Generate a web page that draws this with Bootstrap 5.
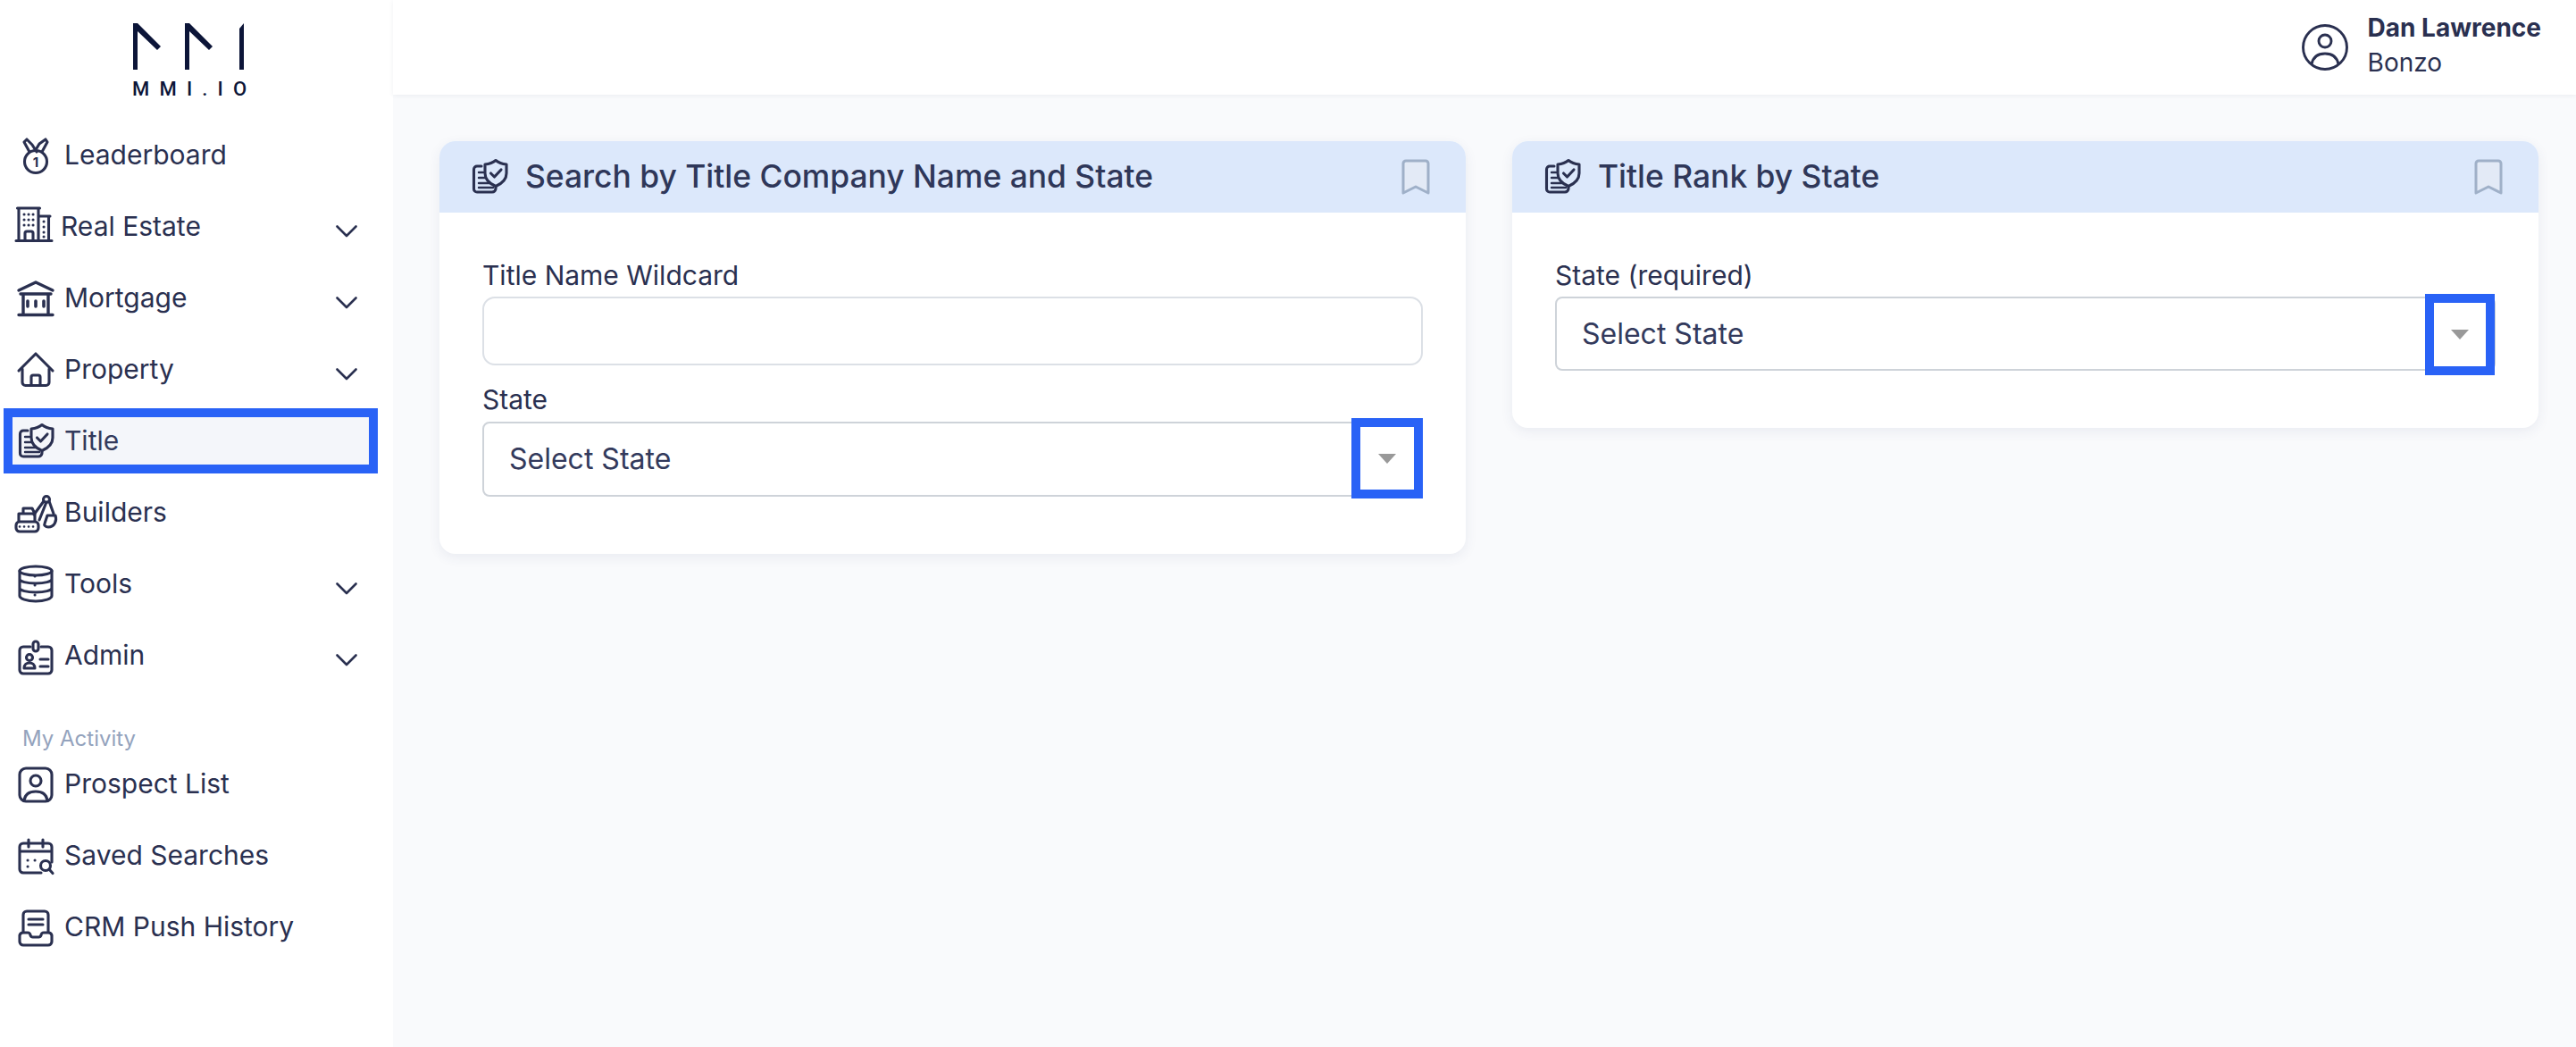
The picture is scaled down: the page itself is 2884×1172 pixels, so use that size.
<!doctype html>
<html lang="en">
<head>
<meta charset="utf-8">
<title>MMI.IO</title>
<link href="https://cdn.jsdelivr.net/npm/bootstrap@5.3.0/dist/css/bootstrap.min.css" rel="stylesheet">
<style>
html,body{height:100%}
body{font-family:"Inter","Liberation Sans",sans-serif;background:#f9fafc;color:#2a3050;overflow:hidden}
.app-shell{height:1172px}
.side-panel{width:440px;background:#fff;flex:none}
.logo-wrap{height:137px;padding-top:26px;padding-left:148px}
.logo-text{font-family:"Roboto","Liberation Sans",sans-serif;font-weight:500;font-size:22px;line-height:15px;letter-spacing:11.2px;color:#0c1538;white-space:nowrap;margin-top:12px}
.side-nav{gap:7px}
.side-link{height:73px;padding:0 0 0 20px;font-size:30px;color:#2a3050;gap:12px;width:440px}
.side-link:hover,.side-link:focus{color:#2a3050}
.side-link span{flex:1;margin-top:-1px}
.side-link.is-active{margin-left:4px;width:419px;padding-left:6px;border:10px solid #2962f6;background:#f4f6fa;color:#333a5c;gap:12px}
.ico{width:40px;height:40px;flex:none;overflow:visible;fill:none;stroke:#2a3050;stroke-width:3.1;stroke-linecap:round;stroke-linejoin:round}
.ico.narrow{margin-right:-4px}
.chev{width:24px;height:14px;flex:none;margin-right:40px;margin-top:10px;fill:none;stroke:#2a3050;stroke-width:2.6;stroke-linecap:round;stroke-linejoin:round}
.side-head{font-size:24px;line-height:30px;color:#94a3bd;padding-left:25px;margin:35px 0 -8px}
.top-strip{height:106px;background:#fff;box-shadow:0 1px 5px rgba(40,50,90,.07);padding-right:39px;position:relative}
.who-icon{width:52px;height:52px;fill:none;stroke:#2a3050;stroke-width:2.9;margin-right:22px}
.who-name{font-size:28px;line-height:39px;font-weight:700;color:#2a3050;margin-top:-5px}
.who-role{font-size:28px;line-height:39px;color:#2a3050}
.main-area{padding:52px 42px 0 52px}
.card-row{--bs-gutter-x:52px;--bs-gutter-y:0}
.form-tile{border:0;border-radius:18px;box-shadow:0 4px 14px rgba(50,70,120,.08);background:#fff;--bs-card-inner-border-radius:18px}
.form-tile .card-header{height:80px;background:#dce8fb;border:0;padding:0 40px 0 36px;gap:20px}
.tile-title{font-size:35.4px;font-weight:500;color:#2f3759;margin:0;line-height:1;flex:1}
.mark-ico{width:32px;height:40px;flex:none;fill:#e3eaf6;stroke:#9fb0c8;stroke-width:3;stroke-linejoin:round}
.form-tile .card-body{padding:50px 48px 64px}
.field-label{font-size:30px;line-height:40px;color:#2a3050;margin:0 0 4px;display:block}
.text-box{height:77px;border:2px solid #dce0e6;border-radius:14px;box-shadow:none;font-size:30px}
.select-wrap{position:relative}
.select-box{height:84px;padding:0 28px;font-size:32px;color:#333a5c;border:2px solid #ced3d9;border-radius:8px;background-image:none;box-shadow:none;font-family:inherit}
.caret-box{position:absolute;top:-4px;bottom:-2px;right:0;width:80px;border:10px solid #2962f6;background:#fff;display:flex;align-items:center;justify-content:center;pointer-events:none}
.caret-shape{width:0;height:0;border-left:10px solid transparent;border-right:10px solid transparent;border-top:11px solid #999}
.wide-gap{margin-top:18px}
.wide-gap + .select-wrap{margin-top:5px}
.tile-b .select-box{height:83px}
.tile-b .caret-box{top:-3px;bottom:-5px;width:78px;right:1px}
</style>
</head>
<body>
<svg width="0" height="0" class="position-absolute">
<defs>
<symbol id="i-title" viewBox="0 0 40 40" overflow="visible">
<path d="M11 8H6a3.500 3.500 0 0 0-3.500 3.500v22A3.500 3.500 0 0 0 6 37h17a4 4 0 0 0 4-4v-2"/>
<path d="M8 15h5M8 21h8M8 27h14M8 32h16" stroke-width="2.4"/>
<path d="M27 1.500c3 2.500 7 4 12 4.500v10c0 7-5 11.500-12 14.500-7-3-12-7.500-12-14.500V6c5-.5 9-2 12-4.500z" fill="var(--shield,#fff)"/>
<path d="M21.500 16l4 4 7.500-8"/>
</symbol>
</defs>
</svg>
<div class="app-shell d-flex">
<aside class="side-panel d-flex flex-column">
<div class="logo-wrap">
<svg width="128" height="54" viewBox="0 0 128 54" class="d-block"><g fill="#0c1538"><path d="M1 0h5l26 26-4 4L6 9v43H1z"/><path d="M59 0h5l26 26-4 4L64 9v43h-5z"/><path d="M120 6l5-6v52h-5z"/></g></svg>
<div class="logo-text">MMI.IO</div>
</div>
<nav class="nav flex-column side-nav">
<a class="nav-link side-link d-flex align-items-center" href="#">
<svg class="ico" viewBox="0 0 40 40"><circle cx="20" cy="27" r="12.500"/><path d="M13 16L7 5l3-3 6 6 5 8M27 16l6-11-2-3-7 5-3 5"/><text x="20" y="32.500" text-anchor="middle" font-size="15" font-weight="700" fill="#2a3050" stroke="none" font-family="Inter,sans-serif">1</text></svg>
<span>Leaderboard</span></a>
<a class="nav-link side-link d-flex align-items-center" href="#">
<svg class="ico narrow" viewBox="0 0 40 40"><path d="M-2 35.500h40M-.5-1h25M1 -1v36M23 -1v36M23 8h13M34.500 8v27"/><path d="M8 35v-8a2 2 0 0 1 2-2h5a2 2 0 0 1 2 2v8"/><path d="M7 6h.1M12 6h.1M17 6h.1M7 12h.1M12 12h.1M17 12h.1M7 18h.1M12 18h.1M17 18h.1M29 14h.1M29 20h.1M29 26h.1M29 31h.1" stroke-width="3"/></svg>
<span>Real Estate</span><svg class="chev" viewBox="0 0 24 14"><path d="M1.500 1.500L12 12 22.500 1.500"/></svg></a>
<a class="nav-link side-link d-flex align-items-center" href="#">
<svg class="ico" viewBox="0 0 40 40"><path d="M1 11L20 2l19 9M3 15h34M6 15v23M34 15v23M1 38.500h38" stroke-width="3.400"/><path d="M11 23v6M20 23v6M29 23v6" stroke-width="3.600"/></svg>
<span>Mortgage</span><svg class="chev" viewBox="0 0 24 14"><path d="M1.500 1.500L12 12 22.500 1.500"/></svg></a>
<a class="nav-link side-link d-flex align-items-center" href="#">
<svg class="ico" viewBox="0 0 40 40"><path d="M1 21L20 2l19 19"/><path d="M5 19v15a3.500 3.500 0 0 0 3.500 3.500h23A3.500 3.500 0 0 0 35 34V19"/><path d="M15 37v-9a2 2 0 0 1 2-2h6a2 2 0 0 1 2 2v9"/></svg>
<span>Property</span><svg class="chev" viewBox="0 0 24 14"><path d="M1.500 1.500L12 12 22.500 1.500"/></svg></a>
<a class="nav-link side-link is-active d-flex align-items-center" href="#">
<svg class="ico" style="--shield:#f4f6fa" viewBox="0 0 40 40"><use href="#i-title"/></svg>
<span>Title</span></a>
<a class="nav-link side-link d-flex align-items-center" href="#">
<svg class="ico" viewBox="0 0 40 40"><rect x="-2" y="30" width="25" height="11" rx="4"/><path d="M2 35.500h.1M7 35.500h.1M12 35.500h.1M17 35.500h.1" stroke-width="2.600"/><path d="M1 29v-8h5v-6h10l3 6v8M1 21h18"/><path d="M18 22L29 7M24 28L32 8M35 7l5 14"/><circle cx="32" cy="5" r="3.500"/><path d="M33 23h9c2 6-1 13-8 13-3 0-5-2-4-4z"/></svg>
<span>Builders</span></a>
<a class="nav-link side-link d-flex align-items-center" href="#">
<svg class="ico" viewBox="0 0 40 40"><ellipse cx="20" cy="5" rx="18" ry="5"/><path d="M2 5v28c0 3 8 6 18 6s18-3 18-6V5M2 14c0 3 8 5 18 5s18-2 18-5M2 24c0 3 8 5 18 5s18-2 18-5"/><path d="M19 11h.1M19 21h.1M19 32h.1" stroke-width="3"/></svg>
<span>Tools</span><svg class="chev" viewBox="0 0 24 14"><path d="M1.500 1.500L12 12 22.500 1.500"/></svg></a>
<a class="nav-link side-link d-flex align-items-center" href="#">
<svg class="ico" viewBox="0 0 40 40"><path d="M14 10H6a4 4 0 0 0-4 4v22a4 4 0 0 0 4 4h28a4 4 0 0 0 4-4V14a4 4 0 0 0-4-4h-8"/><path d="M17 12V7a3 3 0 0 1 6 0v5a3 3 0 0 1-6 0z"/><circle cx="13" cy="22" r="3.500"/><path d="M7 34c0-4 3-6 6-6s6 2 6 6zM25 24h9M25 32h9"/></svg>
<span>Admin</span><svg class="chev" viewBox="0 0 24 14"><path d="M1.500 1.500L12 12 22.500 1.500"/></svg></a>
<div class="side-head">My Activity</div>
<a class="nav-link side-link d-flex align-items-center" href="#">
<svg class="ico" viewBox="0 0 40 40"><rect x="2" y="2" width="36" height="37" rx="7"/><circle cx="20" cy="16" r="6"/><path d="M7 38c1-7 6-10 13-10s12 3 13 10"/></svg>
<span>Prospect List</span></a>
<a class="nav-link side-link d-flex align-items-center" href="#">
<svg class="ico" viewBox="0 0 40 40"><path d="M26 39H6a4 4 0 0 1-4-4V10a4 4 0 0 1 4-4h28a4 4 0 0 1 4 4v17M2 15h36M12 2v8M28 2v8"/><path d="M11 25h.1M19 25h.1M11 32h.1" stroke-width="3"/><circle cx="31" cy="31" r="5.500"/><path d="M35 35l4 4.500"/></svg>
<span>Saved Searches</span></a>
<a class="nav-link side-link d-flex align-items-center" href="#">
<svg class="ico" viewBox="0 0 40 40"><path d="M6 25V6a4 4 0 0 1 4-4h20a4 4 0 0 1 4 4v19"/><path d="M12 11h16M12 17h16"/><path d="M2 29a4 4 0 0 1 4-3h5a3 3 0 0 1 3 3 3 3 0 0 0 3 2h6a3 3 0 0 0 3-2 3 3 0 0 1 3-3h5a4 4 0 0 1 4 3v7a4 4 0 0 1-4 4H6a4 4 0 0 1-4-4z"/></svg>
<span>CRM Push History</span></a>
</nav>
</aside>
<div class="flex-grow-1 d-flex flex-column">
<header class="top-strip d-flex align-items-center justify-content-end">
<svg class="who-icon" viewBox="0 0 52 52"><circle cx="26" cy="26" r="24.500"/><circle cx="26" cy="19" r="7"/><path d="M11 45c1.500-8 7-12 15-12s13.500 4 15 12"/></svg>
<div><div class="who-name">Dan Lawrence</div><div class="who-role">Bonzo</div></div>
</header>
<main class="main-area">
<div class="row card-row align-items-start">
<div class="col-6">
<section class="card form-tile">
<div class="card-header d-flex align-items-center">
<svg class="ico" style="--shield:#dce8fb" viewBox="0 0 40 40"><use href="#i-title"/></svg>
<h2 class="tile-title">Search by Title Company Name and State</h2>
<svg class="mark-ico" viewBox="0 0 32 40"><path d="M2 5a3 3 0 0 1 3-3h22a3 3 0 0 1 3 3v33l-14-7-14 7z"/></svg>
</div>
<div class="card-body">
<label class="field-label" for="f1">Title Name Wildcard</label>
<input id="f1" class="form-control text-box" type="text">
<label class="field-label wide-gap" for="f2">State</label>
<div class="select-wrap">
<select id="f2" class="form-select select-box"><option>Select State</option></select>
<div class="caret-box"><div class="caret-shape"></div></div>
</div>
</div>
</section>
</div>
<div class="col-6">
<section class="card form-tile tile-b">
<div class="card-header d-flex align-items-center">
<svg class="ico" style="--shield:#dce8fb" viewBox="0 0 40 40"><use href="#i-title"/></svg>
<h2 class="tile-title">Title Rank by State</h2>
<svg class="mark-ico" viewBox="0 0 32 40"><path d="M2 5a3 3 0 0 1 3-3h22a3 3 0 0 1 3 3v33l-14-7-14 7z"/></svg>
</div>
<div class="card-body">
<label class="field-label" for="f3">State (required)</label>
<div class="select-wrap">
<select id="f3" class="form-select select-box"><option>Select State</option></select>
<div class="caret-box"><div class="caret-shape"></div></div>
</div>
</div>
</section>
</div>
</div>
</main>
</div>
</div>
<script src="https://cdn.jsdelivr.net/npm/bootstrap@5.3.0/dist/js/bootstrap.bundle.min.js"></script>
</body>
</html>
